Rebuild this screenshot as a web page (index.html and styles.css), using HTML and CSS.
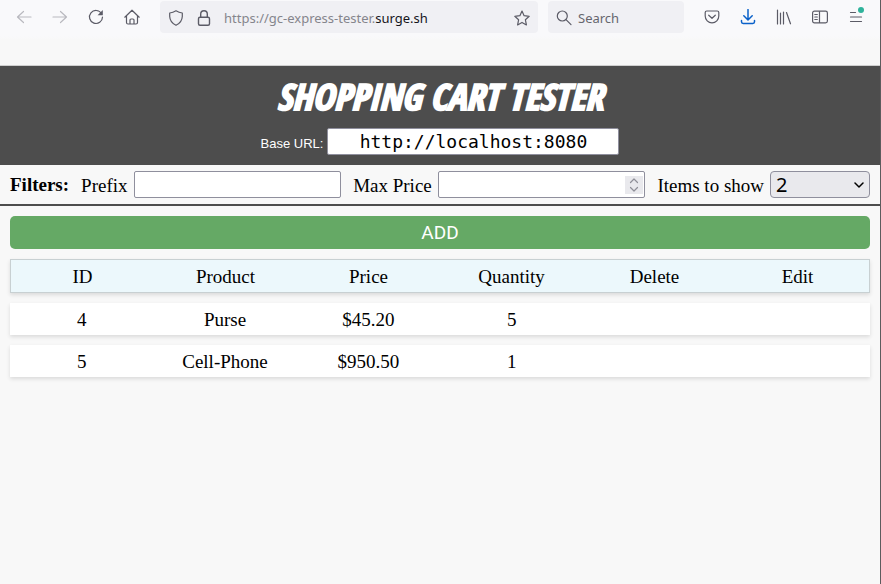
FILE: index.html
```
<!DOCTYPE html>
<html lang="en">
<head>
<meta charset="utf-8">
<title>Shopping Cart Tester</title>
<link rel="stylesheet" href="styles.css">
</head>
<body>
<nav class="toolbar" aria-label="Browser">
  <div class="tools">
    <button class="tool faded" aria-label="Back"><svg viewBox="0 0 16 16"><path d="M15 8H1.500M7.500 2.500L1.500 8l6 5.500"/></svg></button>
    <button class="tool faded" aria-label="Forward"><svg viewBox="0 0 16 16"><path d="M1 8h13.500M8.500 2.500l6 5.500-6 5.500"/></svg></button>
    <button class="tool" aria-label="Reload"><svg viewBox="0 0 16 16"><path d="M13.500 4.500A6.500 6.500 0 1 0 14.500 8"/><path class="solid" d="M14.800 1v5.200H9.600z"/></svg></button>
    <button class="tool" aria-label="Home"><svg viewBox="0 0 16 16"><path d="M.8 8.200L8 1.200l7.200 7M2.500 7v6.500q0 1.500 1.500 1.500h8q1.500 0 1.500-1.500V7M6 15v-4q0-1 1-1h2q1 0 1 1v4"/></svg></button>
  </div>
  <div class="field address">
    <svg viewBox="0 0 16 16"><path d="M8 .8Q11 2.600 14.300 3v3.500Q14 12.500 8 15.300 2 12.500 1.700 6.500V3Q5 2.600 8 .8z"/></svg>
    <svg class="lock" viewBox="0 0 16 16"><rect x="2.500" y="7.200" width="11" height="8" rx="1.500"/><path d="M4.700 7V4a3.300 3.300 0 0 1 6.600 0v3"/></svg>
    <span class="url">https://gc-express-tester.<b>surge.sh</b></span>
    <svg viewBox="0 0 16 16"><path d="M8 1l2.100 4.700 5.100.6-3.800 3.500 1 5.100L8 12.400l-4.400 2.500 1-5.100L.8 6.300l5.100-.6z"/></svg>
  </div>
  <div class="field search">
    <svg viewBox="0 0 16 16"><circle cx="6.300" cy="6" r="5"/><path d="M10 9.700l5 5"/></svg>
    <input type="text" placeholder="Search" aria-label="Search">
  </div>
  <div class="tools">
    <button class="tool" aria-label="Pocket"><svg viewBox="0 0 16 16"><path d="M2.800 2h10.400q1.600 0 1.600 1.600V7a6.800 6.800 0 0 1-13.600 0V3.600Q1.200 2 2.800 2zM4.700 6.200L8 9.300l3.300-3.100"/></svg></button>
    <button class="tool download" aria-label="Downloads"><svg viewBox="0 0 16 16"><path d="M8 .5v10.300M3.800 6.800L8 11l4.200-4.200M1.500 11.500v1.300q0 1.700 1.700 1.700h9.600q1.700 0 1.700-1.700v-1.300"/></svg></button>
    <button class="tool" aria-label="Library"><svg viewBox="0 0 16 16"><path d="M1.500 1v14M4.500 4v11M7.500 3v12M10.500 3.500L14.500 14.800"/></svg></button>
    <button class="tool" aria-label="Sidebar"><svg viewBox="0 0 16 16"><rect x=".6" y="2.200" width="14.800" height="11.600" rx="1.800"/><path d="M7.500 2.500v11M2.800 5.500h2.500M2.800 8h2.500M2.800 10.500h2.500"/></svg></button>
    <button class="tool" aria-label="Menu"><svg viewBox="0 0 16 16"><path d="M2.500 3.500h5M2.500 8h11M2.500 12.500h11"/></svg><span class="dot"></span></button>
  </div>
</nav>

<header class="banner">
  <h1>SHOPPING CART TESTER</h1>
  <div class="base">
    <label for="base-url">Base URL:</label>
    <input id="base-url" type="text" value="http://localhost:8080">
  </div>
</header>

<form class="filters">
  <strong>Filters:</strong>
  <div class="filter">
    <label for="prefix">Prefix</label>
    <input id="prefix" type="text">
  </div>
  <div class="filter">
    <label for="max-price">Max Price</label>
    <div class="number">
      <input id="max-price" type="number">
      <svg class="spinner" viewBox="0 0 18 18"><path d="M5.500 6.500L9 3l3.500 3.500M5.500 11.500L9 15l3.500-3.500"/></svg>
    </div>
  </div>
  <div class="filter fixed">
    <label for="limit">Items to show</label>
    <div class="picker">
      <select id="limit"><option>2</option></select>
      <svg class="chevron" viewBox="0 0 10 10"><path d="M1 3l4 4 4-4"/></svg>
    </div>
  </div>
</form>

<main>
  <button class="add">ADD</button>
  <table>
    <thead>
      <tr><th>ID</th><th>Product</th><th>Price</th><th>Quantity</th><th>Delete</th><th>Edit</th></tr>
    </thead>
    <tbody>
      <tr><td>4</td><td>Purse</td><td>$45.20</td><td>5</td><td></td><td></td></tr>
      <tr><td>5</td><td>Cell-Phone</td><td>$950.50</td><td>1</td><td></td><td></td></tr>
    </tbody>
  </table>
</main>
</body>
</html>
```
FILE: styles.css
```
* {
  box-sizing: border-box;
}

body {
  margin: 0;
  min-height: 100vh;
  border-right: 1px solid #5c5c5e;
  background: #f8f8f8;
  color: #000;
  font: 19px/22px "Liberation Serif", serif;
}

button,
input,
select {
  margin: 0;
  font: inherit;
}

svg {
  flex: none;
  width: 16px;
  height: 16px;
  fill: none;
  stroke: #5b5b66;
  stroke-width: 1.2;
  stroke-linecap: round;
  stroke-linejoin: round;
}

.toolbar {
  display: flex;
  align-items: center;
  gap: 10px;
  padding: 1px 6px 32px;
  border-bottom: 1px solid #cfcfcf;
  background: linear-gradient(#f9f9fb 36px, #f8f8f8 40px);
  font: 14px/20px "Noto Sans", sans-serif;
}

.tools {
  display: flex;
}

.tool {
  position: relative;
  display: flex;
  align-items: center;
  justify-content: center;
  width: 36px;
  height: 32px;
  padding: 0;
  border: 0;
  background: none;
}

.faded svg {
  stroke: #b9b9bf;
}

.download svg {
  stroke: #0a61c9;
  stroke-width: 1.5;
}

.solid {
  fill: #5b5b66;
  stroke: none;
}

.dot {
  position: absolute;
  top: 6px;
  right: 10px;
  width: 6px;
  height: 6px;
  border-radius: 50%;
  background: #2fb39b;
}

.field {
  display: flex;
  align-items: center;
  height: 32px;
  padding: 1px 8px 0;
  border-radius: 4px;
  background: #f0f0f4;
}

.address {
  flex: 1;
  gap: 12px;
}

.lock {
  stroke-width: 1.4;
}

.url {
  flex: 1;
  color: #85858c;
  font-size: 13px;
}

.url b {
  color: #15141a;
  font-weight: 400;
}

.search {
  gap: 6px;
  width: 136px;
}

.search input {
  width: 100%;
  min-width: 0;
  padding: 0;
  border: 0;
  background: none;
  font-size: 13px;
}

.search input::placeholder {
  color: #66666e;
}

.banner {
  display: flex;
  flex-direction: column;
  align-items: center;
  gap: 8px;
  padding: 8px 10px 10px;
  background: #4d4d4d;
  color: #fff;
}

h1 {
  margin: 0;
  font: italic bold 36px/46px "Open Sans Condensed", "Liberation Sans Narrow", sans-serif;
  -webkit-text-stroke: 2px #fff;
}

.base {
  display: flex;
  align-items: center;
  gap: 4px;
  font: 13px/20px "Liberation Sans", sans-serif;
}

.base label {
  padding-top: 4px;
}

.base input {
  width: 292px;
  height: 27px;
  padding: 0;
  border: 1px solid #8f8f9d;
  border-radius: 2px;
  background: #fff;
  color: #000;
  font: 18px/24px "DejaVu Sans Mono", monospace;
  text-align: center;
}

.filters {
  display: flex;
  align-items: center;
  gap: 12px;
  padding: 6px 10px;
  border-bottom: 2px solid #4d4d4d;
}

.filter {
  display: flex;
  flex: 1 1 auto;
  align-items: center;
  gap: 6px;
  white-space: nowrap;
}

.filter label {
  padding-top: 2px;
}

.filters .fixed {
  flex: none;
}

.filter input,
.filter select {
  width: 100%;
  min-width: 0;
  height: 27px;
  padding: 0 5px;
  border: 1px solid #8f8f9d;
  border-radius: 2px;
  background: #fff;
  font: 20px/24px "Noto Sans", sans-serif;
}

.filter > input,
.number {
  flex: 1 1 auto;
  width: 180px;
}

.number,
.picker {
  position: relative;
  display: flex;
}

.picker {
  width: 100px;
}

.filter select {
  appearance: none;
  border-radius: 4px;
  background: #e9e9ed;
  color: #000;
}

.number input {
  appearance: textfield;
}

.spinner {
  position: absolute;
  top: 5px;
  right: 2px;
  width: 18px;
  height: 18px;
  background: #e9e9ed;
  stroke: #8f8f98;
}

.chevron {
  position: absolute;
  top: 9px;
  right: 6px;
  width: 10px;
  height: 10px;
  stroke: #000;
  stroke-width: 1.5;
  pointer-events: none;
}

main {
  display: flex;
  flex-direction: column;
  gap: 10px;
  padding: 10px;
}

.add {
  height: 33px;
  padding: 1px 0 0;
  border: 0;
  border-radius: 5px;
  background: #65a965;
  color: #fff;
  font: 19px/24px Roboto, sans-serif;
}

table,
thead,
tbody {
  display: grid;
  gap: 10px;
}

tr {
  display: grid;
  grid-template-columns: repeat(6, 1fr);
  background: #fff;
  box-shadow: 0 2px 4px rgba(0, 0, 0, 0.12);
  text-align: center;
}

thead tr {
  border: 1px solid #c8d0d2;
  background: #ecf8fc;
}

th,
td {
  height: 32px;
  padding: 6px 0 4px;
  font-weight: 400;
}
```
